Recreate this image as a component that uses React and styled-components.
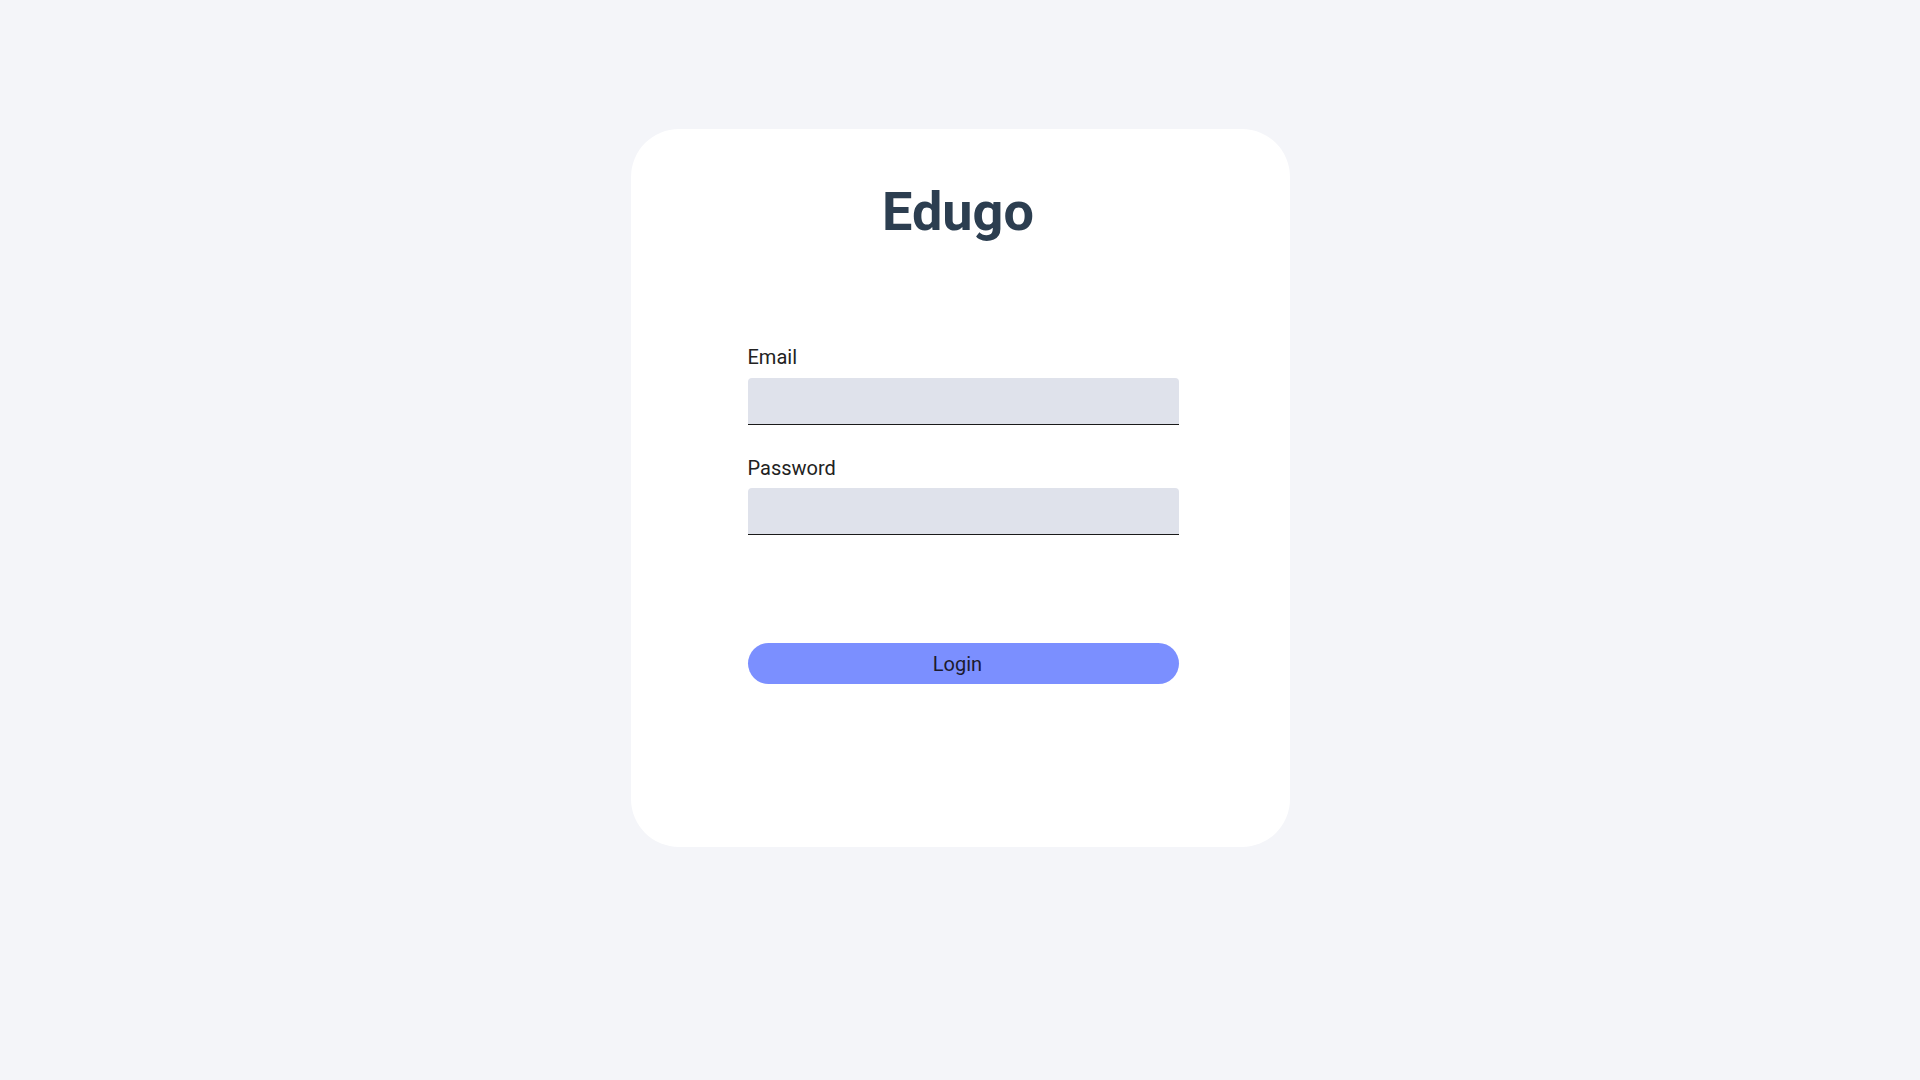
import React from "react";
import styled, { createGlobalStyle } from "styled-components";

const Global = createGlobalStyle`
  html, body { margin: 0; padding: 0; background: #f4f5f9; }
  body { font-family: Roboto, "Liberation Sans", Arial, sans-serif; }
  * { box-sizing: border-box; }
`;

const Page = styled.div`
  min-height: 1080px;
  display: flex;
  justify-content: center;
  align-items: flex-start;
  padding-top: 129px;
`;

const Card = styled.div`
  width: 659px;
  height: 718px;
  background: #ffffff;
  border-radius: 48px;
  padding: 51px 111px 0 117px;
  display: flex;
  flex-direction: column;
`;

const Title = styled.h1`
  margin: 0 0 0 -10px;
  font-size: 54px;
  line-height: 63px;
  font-weight: 700;
  color: #2c3e50;
  text-align: center;
`;

const Form = styled.form`
  display: flex;
  flex-direction: column;
  margin-top: 103px;
`;

const Field = styled.div`
  display: flex;
  flex-direction: column;
  gap: 8px;
  margin-bottom: ${(p) => p.$gap || 0}px;
`;

const Label = styled.label`
  font-size: 20px;
  line-height: 23.5px;
  color: #222;
`;

const Input = styled.input`
  width: 100%;
  height: 47px;
  border: none;
  border-bottom: 1px solid #1a1a1a;
  border-radius: 4px 4px 0 0;
  background: #dfe2eb;
  outline: none;
  font-size: 18px;
  padding: 0 12px;
  font-family: inherit;
`;

const Button = styled.button`
  margin-top: 108px;
  width: 100%;
  height: 41px;
  border: none;
  border-radius: 21px;
  background: #7b8fff;
  color: #1c1b2e;
  font-family: inherit;
  font-size: 20px;
  cursor: pointer;
  padding: 0 11px 0 0;
`;

export default function App() {
  return (
    <>
      <Global />
      <Page>
        <Card>
          <Title>Edugo</Title>
          <Form onSubmit={(e) => e.preventDefault()}>
            <Field $gap={32}>
              <Label htmlFor="email">Email</Label>
              <Input id="email" type="email" />
            </Field>
            <Field>
              <Label htmlFor="password">Password</Label>
              <Input id="password" type="password" />
            </Field>
            <Button type="submit">Login</Button>
          </Form>
        </Card>
      </Page>
    </>
  );
}
